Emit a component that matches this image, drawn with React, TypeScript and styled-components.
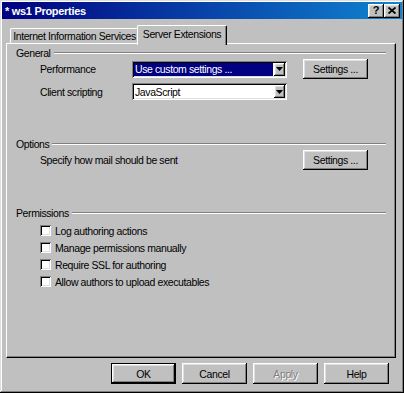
import React from 'react';
import styled, { createGlobalStyle, css } from 'styled-components';

const GlobalStyle = createGlobalStyle`
  html, body { margin: 0; padding: 0; background: #c0c0c0; }
  body {
    font-family: "Liberation Sans", Arial, sans-serif;
    font-size: 10.5px;
    letter-spacing: -0.4px;
    color: #000;
  }
  * { box-sizing: border-box; }
`;

const raised = css`
  box-shadow: inset -1px -1px #000, inset 1px 1px #fff, inset -2px -2px #808080, inset 2px 2px #dfdfdf;
`;

const sunken = css`
  box-shadow: inset 1px 1px #808080, inset -1px -1px #fff, inset 2px 2px #000, inset -2px -2px #dfdfdf;
`;

const Window = styled.div`
  width: 404px;
  height: 393px;
  background: #c0c0c0;
  padding: 2px;
  display: flex;
  flex-direction: column;
  box-shadow: inset -1px -1px #000, inset 1px 1px #dfdfdf, inset -2px -2px #808080, inset 2px 2px #fff;
`;

const TitleBar = styled.div`
  height: 17px;
  background: linear-gradient(90deg, #000080, #1084d0);
  display: flex;
  align-items: center;
  padding: 0 2px 0 3px;
`;

const Title = styled.div`
  flex: 1;
  color: #fff;
  font-weight: bold;
  font-size: 11px;
  letter-spacing: -0.3px;
  white-space: pre;
`;

const TitleButtons = styled.div`
  display: flex;
`;

const TitleButton = styled.div`
  width: 16px;
  height: 14px;
  background: #c0c0c0;
  ${raised};
  display: flex;
  align-items: center;
  justify-content: center;
  font-weight: bold;
  font-size: 11px;
  letter-spacing: 0;
  line-height: 1;
`;

const Body = styled.div`
  flex: 1;
  display: flex;
  flex-direction: column;
  padding: 6px 6px 0 4px;
`;

const TabStrip = styled.div`
  height: 18px;
  display: flex;
  align-items: flex-end;
  padding-left: 4px;
`;

const Tab = styled.div<{ $active?: boolean; $width: number }>`
  width: ${p => p.$width}px;
  height: 15px;
  display: flex;
  align-items: center;
  justify-content: center;
  background: #c0c0c0;
  border-top: 1px solid #fff;
  border-left: 1px solid #fff;
  border-right: 1px solid #000;
  border-radius: 2px 2px 0 0;
  box-shadow: inset -1px 0 #808080;
  white-space: nowrap;
  ${p =>
    p.$active &&
    css`
      width: ${p.$width + 4}px;
      height: 20px;
      margin: 0 -2px -2px;
      padding-bottom: 3px;
      position: relative;
      z-index: 1;
    `}
`;

const Panel = styled.div`
  height: 315px;
  background: #c0c0c0;
  border-top: 1px solid #fff;
  border-left: 1px solid #fff;
  border-right: 1px solid #000;
  border-bottom: 1px solid #000;
  box-shadow: inset -1px -1px #808080;
  padding: 3px 9px 0 9px;
  display: flex;
  flex-direction: column;
`;

const GroupHeader = styled.div<{ $top: number }>`
  height: 12px;
  margin-top: ${p => p.$top}px;
  display: flex;
  align-items: center;
`;

const GroupLabel = styled.span`
  line-height: 12px;
`;

const GroupLine = styled.div`
  flex: 1;
  height: 2px;
  margin-left: 3px;
  border-top: 1px solid #808080;
  border-bottom: 1px solid #fff;
`;

const Row = styled.div<{ $top: number; $height: number }>`
  height: ${p => p.$height}px;
  margin-top: ${p => p.$top}px;
  padding-left: 24px;
  display: flex;
  align-items: center;
`;

const Label = styled.span<{ $width: number }>`
  width: ${p => p.$width}px;
  white-space: nowrap;
`;

const Select = styled.div`
  width: 155px;
  height: 17px;
  background: #fff;
  padding: 2px;
  display: flex;
  ${sunken};
`;

const SelectValue = styled.div<{ $selected?: boolean }>`
  flex: 1;
  display: flex;
  align-items: center;
  padding-left: 1px;
  margin-right: 1px;
  white-space: nowrap;
  ${p =>
    p.$selected &&
    css`
      background: #000080;
      color: #fff;
    `}
`;

const SelectArrow = styled.div`
  width: 11px;
  background: #c0c0c0;
  ${raised};
  display: flex;
  align-items: center;
  justify-content: center;
`;

const Button = styled.button<{ $height: number; $default?: boolean; $gap?: number }>`
  width: 65px;
  height: ${p => p.$height}px;
  margin: 0 0 0 ${p => p.$gap ?? 0}px;
  padding: 0;
  border: none;
  background: #c0c0c0;
  font: inherit;
  letter-spacing: inherit;
  color: #000;
  display: flex;
  align-items: center;
  justify-content: center;
  ${raised};
  ${p =>
    p.$default &&
    css`
      border: 1px solid #000;
    `}
  &:disabled {
    color: #808080;
    text-shadow: 1px 1px #fff;
  }
`;

const CheckList = styled.div`
  margin-top: 3px;
  display: flex;
  flex-direction: column;
`;

const CheckRow = styled.label`
  height: 17px;
  padding-left: 24px;
  display: flex;
  align-items: center;
`;

const CheckBox = styled.span`
  width: 11px;
  height: 11px;
  margin-right: 4px;
  background: #fff;
  ${sunken};
`;

const Footer = styled.div`
  display: flex;
  justify-content: flex-end;
  gap: 6px;
  padding: 5px 7px 0 0;
`;

const Arrow = () => (
  <svg width="7" height="4" viewBox="0 0 7 4">
    <polygon points="0,0 7,0 3.5,4" fill="#000" />
  </svg>
);

const CloseGlyph = () => (
  <svg width="8" height="7" viewBox="0 0 8 7">
    <path d="M0.5 0.5 L7.5 6.5 M7.5 0.5 L0.5 6.5" stroke="#000" strokeWidth="1.8" />
  </svg>
);

const permissions = [
  'Log authoring actions',
  'Manage permissions manually',
  'Require SSL for authoring',
  'Allow authors to upload executables',
];

export default function App() {
  return (
    <>
      <GlobalStyle />
      <Window>
        <TitleBar>
          <Title>* ws1 Properties</Title>
          <TitleButtons>
            <TitleButton>?</TitleButton>
            <TitleButton>
              <CloseGlyph />
            </TitleButton>
          </TitleButtons>
        </TitleBar>
        <Body>
          <TabStrip>
            <Tab $width={129}>Internet Information Services</Tab>
            <Tab $width={86} $active>
              Server Extensions
            </Tab>
          </TabStrip>
          <Panel>
            <GroupHeader $top={0}>
              <GroupLabel>General</GroupLabel>
              <GroupLine />
            </GroupHeader>
            <Row $top={0} $height={20}>
              <Label $width={92}>Performance</Label>
              <Select>
                <SelectValue $selected>Use custom settings ...</SelectValue>
                <SelectArrow>
                  <Arrow />
                </SelectArrow>
              </Select>
              <Button $height={20} $gap={16}>
                Settings ...
              </Button>
            </Row>
            <Row $top={4} $height={17}>
              <Label $width={92}>Client scripting</Label>
              <Select>
                <SelectValue>JavaScript</SelectValue>
                <SelectArrow>
                  <Arrow />
                </SelectArrow>
              </Select>
            </Row>

            <GroupHeader $top={38}>
              <GroupLabel>Options</GroupLabel>
              <GroupLine />
            </GroupHeader>
            <Row $top={0} $height={20}>
              <Label $width={263}>Specify how mail should be sent</Label>
              <Button $height={20}>Settings ...</Button>
            </Row>

            <GroupHeader $top={37}>
              <GroupLabel>Permissions</GroupLabel>
              <GroupLine />
            </GroupHeader>
            <CheckList>
              {permissions.map(p => (
                <CheckRow key={p}>
                  <CheckBox />
                  {p}
                </CheckRow>
              ))}
            </CheckList>
          </Panel>
          <Footer>
            <Button $height={21} $default>
              OK
            </Button>
            <Button $height={21}>Cancel</Button>
            <Button $height={21} disabled>
              Apply
            </Button>
            <Button $height={21}>Help</Button>
          </Footer>
        </Body>
      </Window>
    </>
  );
}
